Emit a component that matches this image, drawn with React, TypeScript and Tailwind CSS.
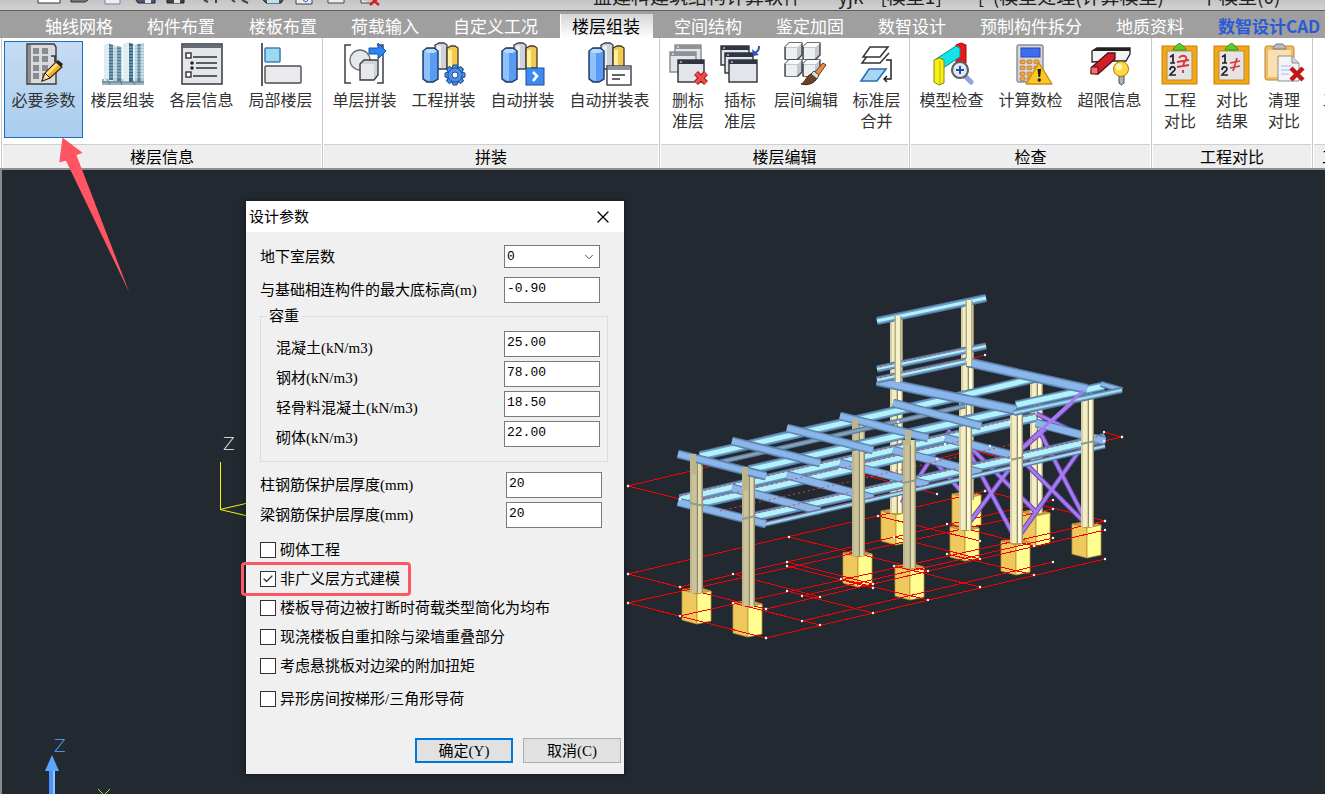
import React, { useState } from "react";
import { ChevronDown, Check, X } from "lucide-react";

type Pt = [number, number];
type Line = [number, number, number, number];

/* ---------- ribbon icons ---------- */

function Icon({ children }: { children: React.ReactNode }) {
  return (
    <svg viewBox="0 0 44 44" className="size-11 shrink-0" fill="none" aria-hidden="true">
      {children}
    </svg>
  );
}

function ParamsIcon() {
  const rows = [6, 14, 23, 31];
  return (
    <Icon>
      <path d="M5 2h27l2 3v37H5z" fill="#d9dade" stroke="#3a3a3a" strokeWidth="1.4" />
      <path d="M6 3h3v38H6z" fill="#8b8d92" />
      {rows.map((y) => (
        <g key={y} fill="#8a8c90">
          <rect x="11" y={y} width="6" height="6" />
          <rect x="20" y={y} width="6" height="6" />
        </g>
      ))}
      <path d="M29 14h4v6" stroke="#333" strokeWidth="1.6" />
      <path d="M20 39l3-8 11-11 6 5-12 11z" fill="#f6b01f" stroke="#3b2b12" strokeWidth="1.2" />
      <path d="M23 32l11-11 2 2-11 11z" fill="#ffe27a" />
      <path d="M20 39l3-8 5 5z" fill="#f7e3c0" stroke="#3b2b12" />
      <path d="M34 20l2-2 5 4-2 3z" fill="#262626" />
    </Icon>
  );
}

function TowersIcon() {
  const lines = [5, 8, 11, 14, 17, 20, 23, 26, 29, 32, 35];
  return (
    <Icon>
      <path d="M1 37h42v6H1z" fill="#9db4be" />
      <path d="M3 3l5-2 6 2v36H3z" fill="#dbe9ec" />
      <path d="M8 2l4 1v35H8z" fill="#3f7190" />
      <path d="M12 4l9 1v34h-9z" fill="#b7d0d9" />
      <path d="M16 4l4 1v34h-4z" fill="#4d829c" />
      <path d="M22 2l6-2 6 2v38H22z" fill="#dfebee" />
      <path d="M28 1l4 1v38h-4z" fill="#2f6585" />
      <path d="M34 3l9-2v38h-9z" fill="#b0cbd5" />
      <path d="M38 2v38" stroke="#4b7f99" strokeWidth="3" />
      {lines.map((y) => (
        <path key={y} d={`M3 ${y}h40`} stroke="#f3f9fb" strokeWidth="0.8" opacity="0.7" />
      ))}
      <path d="M1 40h42M6 37l3 6M18 37l3 6M31 37l3 6" stroke="#5c7b88" />
    </Icon>
  );
}

function ListIcon() {
  return (
    <Icon>
      <rect x="2" y="2" width="40" height="40" fill="#e4e6ea" stroke="#3f434a" strokeWidth="1.6" />
      <rect x="3" y="3" width="38" height="3" fill="#666c77" />
      <rect x="6" y="11" width="5" height="5" fill="#fff" stroke="#2d2f33" strokeWidth="1.4" />
      <rect x="6" y="30" width="5" height="5" fill="#fff" stroke="#2d2f33" strokeWidth="1.4" />
      <path d="M13 15h24M16 21h21M16 26h21M13 34h24" stroke="#2d2f33" strokeWidth="1.3" />
      <circle cx="12" cy="21" r="1.8" fill="#222" />
      <circle cx="12" cy="26" r="1.8" fill="#222" />
    </Icon>
  );
}

function LocalFloorIcon() {
  return (
    <Icon>
      <path d="M3 1v43" stroke="#333" strokeWidth="1.6" />
      <rect x="6" y="6" width="15" height="14" rx="1" fill="#9bd9ec" stroke="#3f7fc4" strokeWidth="1.6" />
      <rect x="6" y="24" width="36" height="17" rx="1" fill="#e9e9ee" stroke="#4b4d52" strokeWidth="1.4" />
    </Icon>
  );
}

function SingleAssembleIcon() {
  return (
    <Icon>
      <path d="M8 3H2v38h6M34 3h6v38h-6" stroke="#3c3f45" strokeWidth="1.5" />
      <circle cx="17" cy="18" r="10" fill="#e6e8ed" stroke="#6a6d74" strokeWidth="1.3" />
      <path d="M17 22l4-4h14v15l-4 5H17z" fill="#cfd3da" stroke="#3c3f45" strokeWidth="1.4" />
      <path d="M18 22h13v15H18z" fill="#e6e8ec" />
      <path d="M26 6h9V1l8 8-8 8v-5h-9z" fill="#2a86f5" stroke="#14509f" />
    </Icon>
  );
}

function Pillars() {
  return (
    <>
      <path d="M13 3l4-2h5l3 2v24H13z" fill="#cfd2da" stroke="#3e424a" strokeWidth="1.3" />
      <path d="M15 4h4v22h-4z" fill="#eceef2" />
      <path d="M25 6l4-2h4l3 2v20H25z" fill="#f4c94f" stroke="#3e3a2a" strokeWidth="1.3" />
      <path d="M26 8h4v18h-4z" fill="#fff19a" />
      <path d="M1 9l4-3h7l4 3v28l-5 3H5l-4-3z" fill="#5a9bf4" stroke="#1e3760" strokeWidth="1.4" />
      <path d="M2 10h6v29l-3-1-3-2z" fill="#8fc2fb" />
      <path d="M2 9l3-2h7l3 2-3 2H5z" fill="#b9dafd" />
    </>
  );
}

function ProjectAssembleIcon() {
  const teeth = [0, 45, 90, 135, 180, 225, 270, 315];
  return (
    <Icon>
      <Pillars />
      {teeth.map((a) => (
        <path key={a} d="M31 23h4l1 4h-6z" transform={`rotate(${a} 33 33)`} fill="#4a90ea" stroke="#1c4a8e" />
      ))}
      <circle cx="33" cy="33" r="7" fill="#4a90ea" stroke="#1c4a8e" />
      <circle cx="33" cy="33" r="6.500" fill="#4a90ea" />
      <circle cx="33" cy="33" r="3" fill="#fff" stroke="#1c4a8e" />
    </Icon>
  );
}

function AutoAssembleIcon() {
  return (
    <Icon>
      <Pillars />
      <rect x="25" y="26" width="18" height="17" fill="#3d8bf0" stroke="#1d4f96" />
      <path d="M32 30l4 4-4 5" stroke="#fff" strokeWidth="2.6" />
    </Icon>
  );
}

function AssembleTableIcon() {
  return (
    <Icon>
      <Pillars />
      <rect x="19" y="24" width="24" height="19" fill="#fff" stroke="#3a3d44" strokeWidth="1.4" />
      <rect x="20" y="24" width="22" height="4" fill="#8b93a3" />
      <path d="M24 33h13M24 37h8" stroke="#333" strokeWidth="1.4" />
    </Icon>
  );
}

function MiniWindow({ x, y, w, h, faded }: { x: number; y: number; w: number; h: number; faded?: boolean }) {
  return (
    <g>
      <rect x={x} y={y} width={w} height={h} fill="#e3e5ea" stroke={faded ? "#888a8e" : "#2c2f36"} strokeWidth="1.4" />
      <rect x={x} y={y} width={w} height="4" fill={faded ? "#8f9298" : "#2f3542"} />
      <path d={`M${x + 2} ${y + 2}h2`} stroke="#fff" />
    </g>
  );
}

function DeleteFloorIcon() {
  return (
    <Icon>
      <MiniWindow x={9} y={3} w={26} h={19} faded />
      <MiniWindow x={4} y={10} w={26} h={20} faded />
      <MiniWindow x={12} y={18} w={26} h={22} />
      <path d="M30 31l10 10M40 31l-10 10" stroke="#8e1a1a" strokeWidth="5.5" />
      <path d="M30 31l10 10M40 31l-10 10" stroke="#ef4b47" strokeWidth="3.6" />
    </Icon>
  );
}

function InsertFloorIcon() {
  return (
    <Icon>
      <MiniWindow x={3} y={4} w={28} h={19} />
      <MiniWindow x={7} y={11} w={28} h={20} />
      <MiniWindow x={11} y={18} w={28} h={22} />
      <path d="M41 4c0 4-1 5-4 7" stroke="#2a55b8" strokeWidth="2" />
      <path d="M34 7l1 7 6-1z" fill="#2a55b8" />
    </Icon>
  );
}

function FloorEditIcon() {
  const cells: Pt[] = [[1, 5], [19, 5], [1, 22], [19, 22]];
  return (
    <Icon>
      {cells.map(([x, y]) => (
        <g key={`${x}-${y}`} strokeLinejoin="round">
          <path d={`M${x} ${y}l4-4h13v12l-4 4H${x}z`} fill="#c3c7cf" stroke="#3d4047" strokeWidth="1.4" />
          <path d={`M${x} ${y}l4-4h13l-4 4z`} fill="#fbfbfc" />
          <path d={`M${x + 1} ${y + 1}h11v11H${x + 1}z`} fill="#eceef1" />
        </g>
      ))}
      <path d="M30 31l9-10 3 2-8 11z" fill="#e98b45" stroke="#6d3311" />
      <path d="M17 42c4-1 5-8 10-10l6 4c-2 5-9 8-16 6z" fill="#6c4327" stroke="#3a2110" />
      <path d="M27 32l3-3 5 4-2 4z" fill="#d8dadd" stroke="#444" />
    </Icon>
  );
}

function MergeFloorIcon() {
  return (
    <Icon>
      <path d="M13 13l-6 8h18l9-10" fill="#fff" stroke="#333" strokeWidth="1.5" />
      <path d="M15 5h18l-8 10H8z" fill="#fff" stroke="#333" strokeWidth="1.5" />
      <path d="M14 27h17l-9 12H6z" fill="#a8d4f5" stroke="#2e6bb2" strokeWidth="1.6" />
      <path d="M31 18h5v19h-7M32 34l-3 3 3 3" stroke="#222" strokeWidth="1.5" />
    </Icon>
  );
}

function ModelCheckIcon() {
  return (
    <Icon>
      <path d="M26 3l5-2 5 2v18H26z" fill="#ef1515" stroke="#9c0d0d" />
      <path d="M6 17L26 4l4 2v9L13 26z" fill="#12e4ea" stroke="#128b90" />
      <path d="M4 18l5-2 5 2v23l-5 2-5-3z" fill="#f7f111" stroke="#8b8510" />
      <path d="M10 19v23" stroke="#b9b214" />
      <path d="M35 34l6 6" stroke="#8ea5e0" strokeWidth="5" strokeLinecap="round" />
      <circle cx="30" cy="28" r="8" fill="#dfe9f8" stroke="#5c5f66" strokeWidth="2.2" />
      <path d="M30 24v8M26 28h8" stroke="#2b4ca0" strokeWidth="2" />
    </Icon>
  );
}

function CalcCheckIcon() {
  const ys = [18, 24, 30, 35];
  return (
    <Icon>
      <rect x="8" y="3" width="26" height="37" rx="2" fill="#d6d7de" stroke="#888a96" strokeWidth="1.4" />
      <rect x="12" y="6" width="19" height="9" fill="#3e6df0" stroke="#2849a8" />
      {ys.map((y) =>
        [11, 18, 25].map((x) => <rect key={`${x}-${y}`} x={x} y={y} width="5" height="3.6" rx="1" fill="#f2a53d" stroke="#b8701b" strokeWidth="0.7" />)
      )}
      <path d="M30 21l13 21H17z" fill="#fbc722" stroke="#d18a12" strokeWidth="1.4" strokeLinejoin="round" />
      <path d="M28.500 27h3.600l-1 8h-1.600z" fill="#1b1b1b" />
      <circle cx="30.300" cy="38" r="1.700" fill="#1b1b1b" />
    </Icon>
  );
}

function OverLimitIcon() {
  return (
    <Icon>
      <path d="M4 9l5-3h33v6l-4 7H26L4 20z" fill="#f4f4f4" stroke="#222" strokeWidth="1.3" />
      <path d="M5 8l4-2h33v3H6z" fill="#222" />
      <path d="M4 25l16-14h7v6L10 32l-7-1z" fill="#cf2029" stroke="#5c0b10" strokeWidth="1.3" />
      <path d="M3 25h7v7H3z" fill="#f17074" stroke="#5c0b10" />
      <path d="M31 34h5v7l-2.500 2-2.500-2z" fill="#a9b4c2" stroke="#4a4f57" />
      <circle cx="33" cy="27" r="7.500" fill="#ffd843" stroke="#a67d14" />
      <circle cx="31" cy="25" r="3.200" fill="#fff4b3" />
    </Icon>
  );
}

function BoardIcon({ compare }: { compare?: boolean }) {
  return (
    <Icon>
      <rect x="4" y="4" width="35" height="38" fill="#f3a712" stroke="#c97f10" />
      <path d="M9 9h25v29H9z" fill="#e4e4e7" stroke="#b98a3a" />
      <path d="M15 8c0-3 3-3 4-5 1-2 4-2 5 0 1 2 4 2 4 5z" fill="#5ccb2f" stroke="#3b8e1c" />
      <path d="M12 15l3-2v8M12 21h5" stroke="#222" strokeWidth="1.7" />
      <path d="M12 28c0-4 5-4 5-1 0 2-3 3-5 6h6" stroke="#222" strokeWidth="1.7" />
      {compare ? (
        <path d="M20 21l10-2M20 26l10-2M27 16l-4 13" stroke="#d9363c" strokeWidth="1.700" />
      ) : (
        <path d="M21 16c3-4 9-2 7 2-1 2-3 2-3 7M19 20l12-2M19 25l12-2M25 28v3" stroke="#d9363c" strokeWidth="1.900" />
      )}
    </Icon>
  );
}

function ClearIcon() {
  return (
    <Icon>
      <rect x="3" y="4" width="29" height="34" rx="2" fill="#f2bd62" stroke="#b98634" />
      <path d="M6 8h23v27H6z" fill="#fbdfae" />
      <path d="M11 7c0-3 2-3 3-5h7c1 2 3 2 3 5z" fill="#b9bbbf" stroke="#77797e" />
      <path d="M16 14h14l7 7v18H16z" fill="#f2f4f8" stroke="#8a8d94" />
      <path d="M30 14v7h7" fill="#d4d8df" stroke="#8a8d94" />
      <path d="M19 24h10M19 28h9M19 32h8" stroke="#a8bce0" />
      <path d="M29 26l12 12M41 26L29 38" stroke="#c21717" strokeWidth="4.500" />
    </Icon>
  );
}

/* ---------- ribbon ---------- */

type Tool = { label: string; icon: React.ReactNode; width: string; active?: boolean };
type Group = { title: string; tools: Tool[] };

const groups: Group[] = [
  {
    title: "楼层信息",
    tools: [
      { label: "必要参数", icon: <ParamsIcon />, width: "w-[79px]", active: true },
      { label: "楼层组装", icon: <TowersIcon />, width: "w-[79px]" },
      { label: "各层信息", icon: <ListIcon />, width: "w-[79px]" },
      { label: "局部楼层", icon: <LocalFloorIcon />, width: "w-[79px]" },
    ],
  },
  {
    title: "拼装",
    tools: [
      { label: "单层拼装", icon: <SingleAssembleIcon />, width: "w-[79px]" },
      { label: "工程拼装", icon: <ProjectAssembleIcon />, width: "w-[79px]" },
      { label: "自动拼装", icon: <AutoAssembleIcon />, width: "w-[79px]" },
      { label: "自动拼装表", icon: <AssembleTableIcon />, width: "w-[95px]" },
    ],
  },
  {
    title: "楼层编辑",
    tools: [
      { label: "删标\n准层", icon: <DeleteFloorIcon />, width: "w-[52px]" },
      { label: "插标\n准层", icon: <InsertFloorIcon />, width: "w-[52px]" },
      { label: "层间编辑", icon: <FloorEditIcon />, width: "w-[80px]" },
      { label: "标准层\n合并", icon: <MergeFloorIcon />, width: "w-[61px]" },
    ],
  },
  {
    title: "检查",
    tools: [
      { label: "模型检查", icon: <ModelCheckIcon />, width: "w-[79px]" },
      { label: "计算数检", icon: <CalcCheckIcon />, width: "w-[79px]" },
      { label: "超限信息", icon: <OverLimitIcon />, width: "w-[79px]" },
    ],
  },
  {
    title: "工程对比",
    tools: [
      { label: "工程\n对比", icon: <BoardIcon />, width: "w-[52px]" },
      { label: "对比\n结果", icon: <BoardIcon compare />, width: "w-[52px]" },
      { label: "清理\n对比", icon: <ClearIcon />, width: "w-[52px]" },
    ],
  },
];

const tabs = ["轴线网格", "构件布置", "楼板布置", "荷载输入", "自定义工况", "楼层组装", "空间结构", "鉴定加固", "数智设计", "预制构件拆分", "地质资料"];

function TitleStrip() {
  return (
    <header className="flex h-[11px] items-end overflow-hidden border-b border-[#5e5e5e] bg-linear-to-b from-[#c4c4c4] to-[#d2d2d2]">
      <svg viewBox="0 0 400 10" className="h-[10px] w-[400px] shrink-0" fill="none" aria-hidden="true">
        <path d="M38 0v3h22V0" fill="#fff" stroke="#333" />
        <path d="M71 0v2h14l3-2" fill="#777" stroke="#333" />
        <path d="M105 0v4h15V0" fill="#e8edf8" stroke="#7b8497" />
        <path d="M136 0l2 3h17V0" fill="#4a5870" stroke="#222" />
        <path d="M145 0h6v3h-6z" fill="#dbe5f2" />
        <path d="M167 0v3h17V0" fill="#444" stroke="#222" />
        <path d="M174 0h6v3h-6z" fill="#e3e3e3" />
        <path d="M204 0l4 2M216 0v3M232 0l3 2M242 0l6 3" stroke="#444" strokeWidth="2" />
        <path d="M263 0l3 3h15l2-3" fill="#555" stroke="#222" />
        <path d="M267 0h12v3h-12z" fill="#bfe0ee" />
        <path d="M296 0v4h16V0M328 0v3h16V0M361 0v3h10" fill="#e9edf4" stroke="#444" />
        <path d="M303 0l3 2 2-2" stroke="#2b62b8" />
        <path d="M370 5l7-6M379 5l-6-5" stroke="#d02222" strokeWidth="2.500" />
      </svg>
      <h1 className="flex shrink-0 gap-9 whitespace-pre pb-1 pl-[193px] text-[19px] leading-5 text-[#222]">
        <span>盈建科建筑结构计算软件</span>
        <span>yjk    [模型1]</span>
        <span>[  (模型处理(计算模型)</span>
        <span>下模型(0)</span>
      </h1>
    </header>
  );
}

function Ribbon() {
  const [current, setCurrent] = useState("楼层组装");
  return (
    <>
      <nav className="flex h-[27px] shrink-0 items-end overflow-hidden bg-[#9f9f9f] pl-7 text-[17px] text-white">
        {tabs.map((t) => (
          <button
            key={t}
            onClick={() => setCurrent(t)}
            className={
              t === current
                ? "-mr-px ml-[5px] mr-1 h-6 shrink-0 whitespace-nowrap border-l border-white bg-linear-to-b from-[#d6d6d6] to-white pl-[11px] pr-[13px] leading-6 text-black"
                : "h-6 shrink-0 whitespace-nowrap px-[17px] leading-6"
            }
          >
            {t}
          </button>
        ))}
        <button className="h-6 shrink-0 whitespace-nowrap px-[17px] font-bold leading-6 text-[#2a5bd7]">数智设计CAD</button>
      </nav>
      <div className="flex shrink-0 overflow-hidden border-b-2 border-[#8f8f8f] bg-white pl-px">
        {groups.map((g) => (
          <section key={g.title} className="flex h-[130px] shrink-0 flex-col border-l border-[#c9c9c9]">
            <div className="flex flex-1 px-[2px] pt-[3px]">
              {g.tools.map((t) => (
                <button
                  key={t.label}
                  className={
                    t.active
                      ? `${t.width} flex h-[97px] flex-col items-center border border-[#1a6fc4] bg-linear-to-b from-[#c6dcf3] to-[#a9cdee]`
                      : `${t.width} flex h-[97px] flex-col items-center border border-transparent`
                  }
                >
                  {t.icon}
                  <span className="mt-[3px] whitespace-pre text-base leading-[21px] text-[#333]">{t.label}</span>
                </button>
              ))}
            </div>
            <h2 className="mx-px h-6 border-t border-[#cfcfcf] bg-[#eeeeee] text-center text-base leading-[22px] text-black">{g.title}</h2>
          </section>
        ))}
        <section className="flex h-[130px] shrink-0 flex-col border-l border-[#c9c9c9]">
          <div className="flex flex-1 px-[2px] pt-[3px]">
            <button className="flex h-[97px] w-12 flex-col items-center pt-12 text-base leading-[21px] text-[#333]">工程</button>
          </div>
          <h2 className="mx-px h-6 border-t border-[#cfcfcf] bg-[#eeeeee] pl-2 text-base leading-[22px] text-black">工具</h2>
        </section>
      </div>
    </>
  );
}

/* ---------- structural model ---------- */

// Footings: x of the front edge, y of the lowest corner.
const footings: Pt[] = [[967, 528], [896, 545], [1036, 546], [965, 561], [1087, 558], [858, 587], [1016, 575], [910, 600], [697, 624], [748, 637]];

// Columns: left x, top, bottom, and whether the face is in shade.
type Column = [number, number, number, boolean];
const backColumns: Column[] = [
  [890, 315, 513, false],
  [961, 299, 500, false],
  [1030, 377, 513, false],
];
const frontColumns: Column[] = [
  [690, 462, 593, true],
  [742, 474, 606, true],
  [852, 424, 556, true],
  [903, 440, 568, true],
  [959, 398, 530, false],
  [1010, 410, 543, false],
  [1081, 392, 527, false],
];
// Left halves of columns that stand in front of the roof beams.
const columnHeads: Line[] = [[693, 454, 693, 475], [745, 467, 745, 490], [855, 419, 855, 428], [908, 430, 908, 445]];

const lowerCross: Line[] = [[678, 502, 766, 524], [732, 488, 820, 511], [787, 475, 873, 498], [840, 463, 928, 485], [893, 450, 981, 473], [945, 438, 1020, 457], [1036, 423, 1105, 441]];
const lowerLong: Line[] = [[680, 499, 1036, 417], [698, 504, 965, 443], [749, 518, 910, 482], [910, 482, 1105, 438]];
const roofCross: Line[] = [[678, 454, 766, 476], [732, 441, 820, 463], [787, 428, 873, 450], [840, 416, 928, 438], [893, 403, 981, 426]];
const roofLong: Line[] = [[700, 456, 965, 395], [749, 470, 910, 433], [910, 433, 1016, 409]];
const deckCross: Line[] = [[877, 381, 1016, 410], [967, 362, 1087, 389]];
const deckLong: Line[] = [[965, 395, 1036, 378], [1016, 405, 1104, 386]];
const braces: Line[] = [[1085, 391, 1022, 448], [1037, 414, 1087, 438], [968, 450, 1015, 538], [1016, 460, 966, 527], [973, 450, 1036, 512], [1024, 462, 1087, 525], [1040, 432, 1087, 523], [1087, 440, 1019, 536], [1050, 425, 1018, 452], [950, 430, 902, 503], [922, 447, 960, 490]];

const groundLines: Line[] = [
  [628, 574, 985, 491], [985, 491, 1105, 521], [628, 574, 766, 609], [766, 609, 1105, 530],
  [628, 603, 766, 638], [766, 638, 1105, 559], [628, 603, 1053, 509], [680, 587, 1053, 500],
  [680, 616, 1105, 521], [733, 574, 820, 597], [787, 562, 873, 584], [787, 566, 873, 588],
  [787, 591, 873, 613], [733, 603, 820, 625], [789, 537, 928, 571], [841, 579, 928, 600],
  [878, 516, 980, 541], [894, 537, 980, 559], [894, 566, 980, 587], [947, 524, 1034, 546],
  [947, 554, 1034, 575], [802, 596, 1053, 538], [802, 621, 1053, 562],
];
const levelLines: Line[] = [[628, 486, 898, 422], [628, 486, 680, 499], [943, 437, 1010, 422], [945, 444, 1010, 460], [937, 459, 990, 446], [1122, 437, 1104, 432], [1122, 437, 1104, 441], [967, 360, 985, 355], [840, 469, 937, 494]];
const dottedLines: Line[] = [[680, 496, 1036, 414], [698, 501, 965, 440], [720, 511, 1036, 439], [749, 515, 1105, 435], [766, 522, 1105, 444]];
const dottedFrame: Line[] = [[880, 367, 986, 343], [880, 378, 967, 358]];

function Strokes({ lines, color, width, dash }: { lines: Line[]; color: string; width: number; dash?: string }) {
  return (
    <g stroke={color} strokeWidth={width} strokeDasharray={dash}>
      {lines.map(([a, b, c, d], i) => (
        <path key={i} d={`M${a} ${b}L${c} ${d}`} />
      ))}
    </g>
  );
}

function Beams({ lines, web, size, webSize }: { lines: Line[]; web: string; size: number; webSize: number }) {
  return (
    <>
      <Strokes lines={lines} color="#54799f" width={size} />
      <Strokes lines={lines} color="#6f9ac4" width={size - 2} />
      <Strokes lines={lines} color={web} width={webSize} />
    </>
  );
}

function Columns({ items }: { items: Column[] }) {
  return (
    <>
      {items.map(([x, top, bottom, shade]) => (
        <g key={`${x}-${top}`}>
          <rect x={x} y={top} width="13" height={bottom - top} fill={shade ? "#bdb58c" : "#d5cda2"} />
          <rect x={x + 2} y={top} width="4" height={bottom - top} fill={shade ? "#c9c29a" : "#f3ecc4"} />
          <rect x={x + 7} y={top} width="1" height={bottom - top} fill="#8f8866" />
          <rect x={x + 8} y={top} width="3" height={bottom - top} fill={shade ? "#e2dab0" : "#fffbd8"} />
          <rect x={x + 12} y={top} width="1" height={bottom - top} fill="#98906c" />
        </g>
      ))}
    </>
  );
}

function Footings() {
  return (
    <>
      {footings.map(([x, y]) => (
        <g key={`${x}-${y}`} stroke="#b8923a" strokeWidth="0.8">
          <path d={`M${x - 15} ${y - 34}l16-3 13 4v3L${x} ${y - 30}z`} fill="#c99f45" />
          <path d={`M${x - 15} ${y - 34}L${x} ${y - 30}V${y}l-15-4z`} fill="#eec85d" />
          <path d={`M${x} ${y - 30}l14-3v30L${x} ${y}z`} fill="#fffc90" />
        </g>
      ))}
    </>
  );
}

function ModelView() {
  return (
    <svg viewBox="0 170 1325 624" preserveAspectRatio="xMinYMin slice" className="absolute inset-0 h-full w-full" fill="none" aria-label="结构模型">
      <path d="M0 170h2v624H0z" fill="#8c8c8c" />
      <Footings />
      <g shapeRendering="crispEdges">
        <Strokes lines={groundLines} color="#f40000" width={1} />
        <Strokes lines={levelLines} color="#f40000" width={1} />
      </g>
      <Columns items={backColumns} />
      <Strokes lines={braces} color="#6944ad" width={5} />
      <Strokes lines={braces} color="#a57cf0" width={3} />

      <Beams lines={[[680, 498, 1036, 416]]} web="#9edff2" size={6} webSize={2} />
      <Beams lines={lowerLong} web="#b2f2fd" size={10} webSize={5} />
      <Beams lines={lowerCross} web="#8ab6ec" size={9} webSize={6} />
      <Beams lines={[[766, 524, 1105, 446]]} web="#9edff2" size={5} webSize={2} />
      <Strokes lines={dottedLines} color="#d8404c" width={1} dash="2 3" />
      <Columns items={frontColumns} />
      <Strokes lines={[[742, 519, 756, 516], [690, 503, 704, 506], [903, 483, 917, 480], [1010, 460, 1024, 457], [1081, 444, 1095, 441]]} color="#8f9a92" width={2} />

      <path d="M700 465l20-5 45 11-16 3z" fill="#3a4249" />
      <Beams lines={[[720, 462, 965, 406]]} web="#a9a29a" size={5} webSize={1} />
      <Beams lines={roofLong} web="#b2f2fd" size={10} webSize={5} />
      <Beams lines={roofCross} web="#8ab6ec" size={9} webSize={5} />
      <Beams lines={deckLong} web="#b2f2fd" size={9} webSize={5} />
      <Beams lines={deckCross} web="#8ab6ec" size={10} webSize={6} />
      <Beams lines={[[1101, 384, 1122, 390]]} web="#8ab6ec" size={6} webSize={3} />
      <Beams lines={[[1014, 413, 1122, 390]]} web="#9edff2" size={6} webSize={2} />
      <Strokes lines={columnHeads} color="#bdb58c" width={6} />

      <Beams lines={[[877, 369, 986, 346], [877, 380, 967, 361]]} web="#b2f2fd" size={7} webSize={2} />
      <Beams lines={[[877, 321, 986, 298]]} web="#b2f2fd" size={8} webSize={3} />
      <Strokes lines={dottedFrame} color="#d8404c" width={1} dash="2 3" />
      <Strokes lines={[[898, 316, 898, 382], [969, 300, 969, 366]]} color="#b5ad84" width={7} />
      <Strokes lines={[[898, 316, 898, 382], [969, 300, 969, 366]]} color="#f7f1ca" width={4} />
      <Strokes lines={[[1083, 391, 1040, 431]]} color="#a57cf0" width={3} />
      <g fill="#f4f4f4">
        {[...groundLines, ...levelLines].map(([a, b, c, d], i) => (
          <React.Fragment key={i}>
            <circle cx={a} cy={b} r="1.200" />
            <circle cx={c} cy={d} r="1.200" />
          </React.Fragment>
        ))}
      </g>

      <path d="M220.500 462v47.500M220 509.500l30-7M220 509.500l30 7" stroke="#f5f500" />
      <text x="223" y="450" fontSize="17" fill="#f2f2f2" fontFamily="DejaVu Sans, sans-serif" fontWeight="200">Z</text>
      <text x="54" y="752" fontSize="17" fill="#5aa8ff" fontFamily="DejaVu Sans, sans-serif" fontWeight="200">Z</text>
      <path d="M49 770h6v24h-6z" fill="#4d94ff" />
      <path d="M53 770h2v24h-2z" fill="#8cc8ff" />
      <path d="M52 755l7 16H45z" fill="#5ca6ff" />
      <path d="M98 789l6 6 6-6" stroke="#a6e05a" />
    </svg>
  );
}

/* ---------- dialog ---------- */

const boxInput = "h-[26px] w-24 border border-[#7a7a7a] bg-white px-[2px] pb-[3px] font-['Liberation_Mono','Noto_Sans_CJK_SC',monospace] text-[13px] text-black outline-none";

function Field({ id, label, value, low }: { id: string; label: string; value: string; low?: boolean }) {
  return (
    <div className="flex items-center justify-between">
      <label htmlFor={id} className={low ? "whitespace-nowrap pt-2" : "whitespace-nowrap"}>{label}</label>
      <input id={id} type="text" defaultValue={value} className={boxInput} />
    </div>
  );
}

function Option({ label, checked, spaced, marked }: { label: string; checked?: boolean; spaced?: boolean; marked?: boolean }) {
  return (
    <div className={spaced ? "mt-1 flex" : "flex"}>
      <label className="relative flex h-4 items-center gap-1 whitespace-nowrap leading-4">
        <input type="checkbox" defaultChecked={checked} className="peer size-4 appearance-none border border-[#333] bg-white" />
        <Check className="pointer-events-none absolute left-[2px] top-[2px] hidden size-3 text-[#333] peer-checked:block" strokeWidth={2.5} />
        {label}
        {marked && <span className="pointer-events-none absolute -inset-x-[19px] -right-[11px] -inset-y-[9px] rounded-[4px] border-[3px] border-[#ff5865]" />}
      </label>
    </div>
  );
}

function DesignDialog() {
  return (
    <div role="dialog" aria-label="设计参数" className="absolute left-[246px] top-[31px] w-[378px] bg-[#f0f0f0] font-['Liberation_Serif','Noto_Sans_CJK_SC',sans-serif] text-[15px] leading-[18px] text-black shadow-[0_0_6px_rgba(0,0,0,0.5)]">
      <div className="flex h-[31px] items-center justify-between bg-white pl-[3px] pr-[13px]">
        <h2>设计参数</h2>
        <button aria-label="关闭">
          <X className="size-4 scale-125" strokeWidth={1.5} />
        </button>
      </div>
      <form className="pl-[14px] pr-4 pt-[13px]" onSubmit={(e) => e.preventDefault()}>
        <div className="flex flex-col gap-[9px] pr-2">
          <div className="flex items-center justify-between">
            <label htmlFor="basement">地下室层数</label>
            <span className="relative flex">
              <select id="basement" defaultValue="0" className="h-[23px] w-24 appearance-none border border-[#7a7a7a] bg-white px-[2px] font-['Liberation_Mono',monospace] text-[13px] outline-none">
                <option>0</option>
                <option>1</option>
                <option>2</option>
              </select>
              <ChevronDown className="pointer-events-none absolute right-1 top-[5px] size-[14px] text-[#444]" strokeWidth={1.5} />
            </span>
          </div>
          <Field id="elev" label="与基础相连构件的最大底标高(m)" value="-0.90" />
        </div>
        <fieldset className="mt-1 border border-[#dcdcdc] pb-[14px] pl-[15px] pr-[7px]">
          <legend className="-ml-[10px] px-[3px]">容重</legend>
          <div className="flex flex-col gap-1 pt-[6px]">
            <Field id="concrete" label="混凝土(kN/m3)" value="25.00" low />
            <Field id="steel" label="钢材(kN/m3)" value="78.00" low />
            <Field id="light" label="轻骨料混凝土(kN/m3)" value="18.50" low />
            <Field id="masonry" label="砌体(kN/m3)" value="22.00" low />
          </div>
        </fieldset>
        <div className="mt-[10px] flex flex-col gap-1 pr-[6px]">
          <Field id="colCover" label="柱钢筋保护层厚度(mm)" value="20" />
          <Field id="beamCover" label="梁钢筋保护层厚度(mm)" value="20" />
        </div>
        <div className="mt-[14px] flex flex-col gap-[13px]">
          <Option label="砌体工程" />
          <Option label="非广义层方式建模" checked marked />
          <Option label="楼板导荷边被打断时荷载类型简化为均布" />
          <Option label="现浇楼板自重扣除与梁墙重叠部分" />
          <Option label="考虑悬挑板对边梁的附加扭矩" />
          <Option label="异形房间按梯形/三角形导荷" spaced />
        </div>
      </form>
      <div className="flex justify-end gap-[10px] pb-[11px] pr-[3px] pt-[31px]">
        <button className="h-[25px] w-[98px] border-2 border-[#0078d7] bg-[#e1e1e1] leading-5">确定(Y)</button>
        <button className="h-[25px] w-[98px] border border-[#adadad] bg-[#e1e1e1] leading-5">取消(C)</button>
      </div>
    </div>
  );
}

export default function App() {
  return (
    <div className="relative flex min-h-screen flex-col overflow-hidden bg-[#222931] font-['Noto_Sans_CJK_SC',sans-serif]">
      <TitleStrip />
      <Ribbon />
      <main className="relative min-h-[604px] flex-1 overflow-hidden">
        <ModelView />
        <DesignDialog />
      </main>
      <svg viewBox="0 0 80 160" className="pointer-events-none absolute left-[55px] top-[135px] h-40 w-20" aria-hidden="true">
        <path d="M7.500 2.500l20 15.200-6 2.600L74.500 158 11 25.700l-6.700 1.600z" fill="#ff5563" />
      </svg>
    </div>
  );
}
